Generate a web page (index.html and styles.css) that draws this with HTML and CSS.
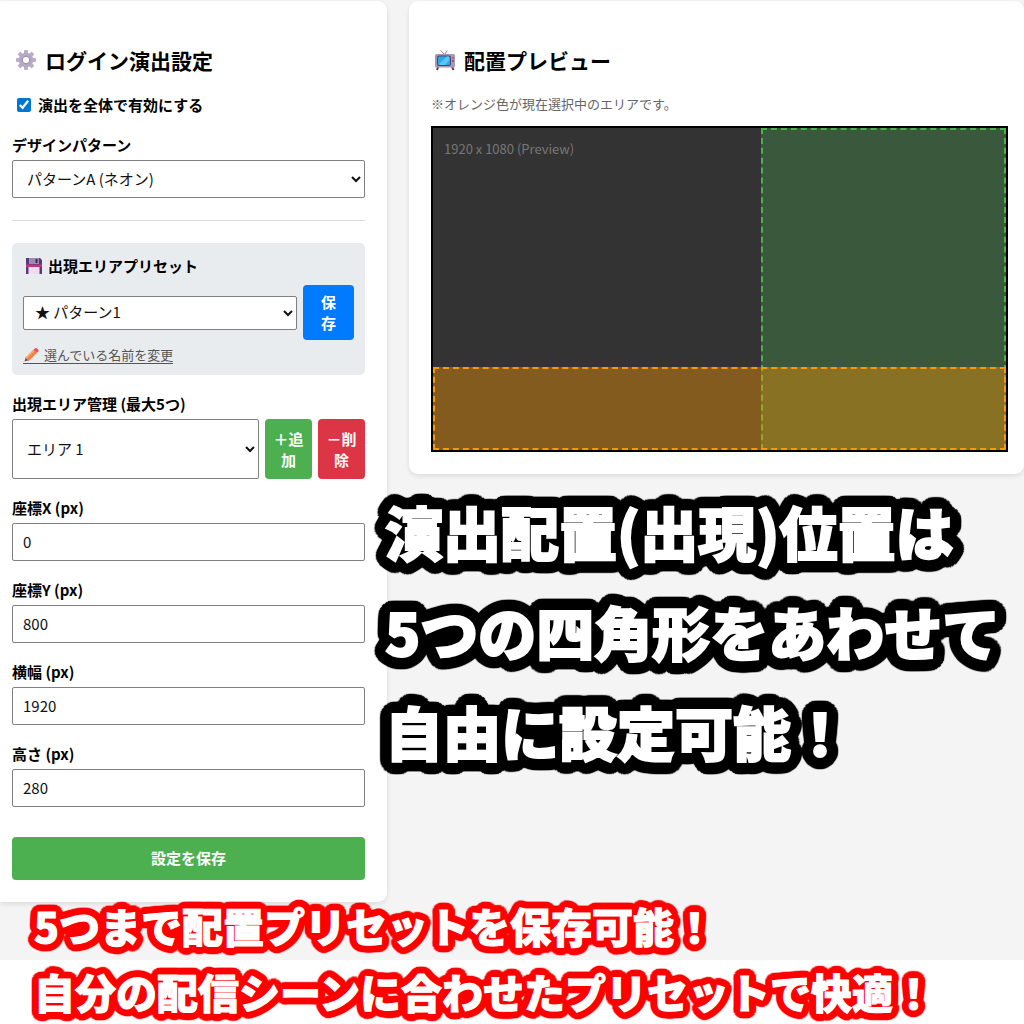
FILE: index.html
```html
<!DOCTYPE html>
<html lang="ja">
<head>
<meta charset="utf-8">
<meta name="viewport" content="width=device-width, initial-scale=1">
<title>ログイン演出設定</title>
<link rel="stylesheet" href="styles.css">
</head>
<body>
<div class="scene">
  <main class="layout">
    <form class="card settings">
      <h2 class="title">
        <svg class="title-icon" viewBox="0 0 28 28" aria-hidden="true">
          <g fill="#b9aecb">
            <rect x="12" y="4" width="4" height="20" rx="1"/>
            <rect x="12" y="4" width="4" height="20" rx="1" transform="rotate(45 14 14)"/>
            <rect x="12" y="4" width="4" height="20" rx="1" transform="rotate(90 14 14)"/>
            <rect x="12" y="4" width="4" height="20" rx="1" transform="rotate(135 14 14)"/>
          </g>
          <circle cx="14" cy="14" r="5.6" fill="#fff" stroke="#b5a9c6" stroke-width="3.4"/>
          <circle cx="14" cy="14" r="3.8" fill="#fff" stroke="#8d7fa3" stroke-width="1"/>
        </svg>
        ログイン演出設定
      </h2>
      <label class="toggle"><input type="checkbox" checked>演出を全体で有効にする</label>

      <div class="field">
        <label for="design">デザインパターン</label>
        <select id="design" class="control"><option>パターンA (ネオン)</option></select>
      </div>

      <hr class="divider">

      <section class="preset">
        <label class="preset-label" for="preset">
          <svg class="preset-icon" viewBox="0 0 21 20" aria-hidden="true">
            <path d="M3 2h14l2 2v14H3z" fill="#563a7c"/>
            <path d="M6 2h10v6H6z" fill="#9d8bb5"/>
            <path d="M12.500 3h2v4h-2z" fill="#3e2860"/>
            <path d="M3 8.500h16v2.500H3z" fill="#c2347b"/>
            <path d="M5.500 11h11v7h-11z" fill="#eedcf1"/>
          </svg>
          出現エリアプリセット
        </label>
        <div class="row preset-row">
          <select id="preset" class="control compact"><option>★ パターン1</option></select>
          <button type="button" class="btn blue">保存</button>
        </div>
        <a class="rename" href="#">
          <svg class="rename-icon" viewBox="0 0 17 16" aria-hidden="true">
            <path d="M1.500 14.500l1.300-4.300 3 3z" fill="#5b5560"/>
            <path d="M2.500 10.800l8-8 3.300 3.300-8 8z" fill="#f58142"/>
            <path d="M2.500 10.800l8-8 1.200 1.200-8 8z" fill="#ffa36b"/>
            <path d="M10.500 2.800l1.600-1.600q1-.7 2 .2l1.200 1.300q.8.900 0 1.900l-1.500 1.500z" fill="#e5525d"/>
          </svg>
          選んでいる名前を変更
        </a>
      </section>

      <div class="field">
        <label for="area">出現エリア管理 (最大5つ)</label>
        <div class="row">
          <select id="area" class="control"><option>エリア 1</option></select>
          <button type="button" class="btn green">＋追加</button>
          <button type="button" class="btn red">－削除</button>
        </div>
      </div>
      <div class="field"><label for="x">座標X (px)</label><input id="x" class="control" type="text" inputmode="numeric" value="0"></div>
      <div class="field"><label for="y">座標Y (px)</label><input id="y" class="control" type="text" inputmode="numeric" value="800"></div>
      <div class="field"><label for="w">横幅 (px)</label><input id="w" class="control" type="text" inputmode="numeric" value="1920"></div>
      <div class="field"><label for="h">高さ (px)</label><input id="h" class="control" type="text" inputmode="numeric" value="280"></div>
      <button type="submit" class="btn green submit">設定を保存</button>
    </form>

    <section class="card stage">
      <h2 class="title">
        <svg class="title-icon" viewBox="0 0 28 28" aria-hidden="true">
          <path d="M9.500 4.500l4 4 2.800-4" fill="none" stroke="#8c8593" stroke-width="1"/>
          <path d="M7.500 20l-1.500 4M21 20l1.300 4" stroke="#4b3f52" stroke-width="2"/>
          <rect x="4" y="8" width="20" height="13.500" rx="1.500" fill="#a898b3"/>
          <rect x="6" y="9.500" width="14" height="10.500" rx="2" fill="#51466b"/>
          <rect x="7" y="10.500" width="12" height="8.500" rx="1.500" fill="#29a8ee"/>
          <path d="M8 18l8-7.500h2v4L14 19H9z" fill="#58c7fa"/>
          <circle cx="22" cy="12" r="1" fill="#df4771"/>
          <circle cx="22" cy="15" r="1" fill="#6c5b78"/>
        </svg>
        配置プレビュー
      </h2>
      <p class="note">※オレンジ色が現在選択中のエリアです。</p>
      <div class="preview">
        <span>1920 x 1080 (Preview)</span>
        <div class="area" style="left:57.29%;top:0;width:42.71%;height:100%"></div>
        <div class="area active" style="left:0;top:74.07%;width:100%;height:25.93%"></div>
      </div>
    </section>
  </main>

  <p class="caption black">演出配置(出現)位置は<br>5つの四角形をあわせて<br>自由に設定可能！</p>
  <p class="caption crimson">5つまで配置プリセットを保存可能！<br>自分の配信シーンに合わせたプリセットで快適！</p>
</div>
</body>
</html>
```
FILE: styles.css
```css
* { box-sizing: border-box; }

body {
  margin: 0;
  background: #fff;
  color: #000;
  font: 15px/22px "Noto Sans CJK JP", sans-serif;
}

.scene {
  position: relative;
  min-height: 100vh;
  overflow: hidden;
}

.layout {
  display: grid;
  grid-template-columns: 387fr 615fr;
  align-items: start;
  gap: 22px;
  padding: 1px 0 58px;
  background: #f4f4f4;
}

.card {
  min-width: 0;
  background: #fff;
  box-shadow: 0 2px 5px rgba(0, 0, 0, .1);
}

.settings {
  padding: 44px 22px 22px 12px;
  border-radius: 0 9px 9px 0;
}

.stage {
  padding: 44px 16px 22px 22px;
  border-radius: 9px;
}

.title {
  display: flex;
  align-items: center;
  gap: 5px;
  margin: 0 0 19px;
  font-size: 21px;
  line-height: 30px;
}

.title-icon { width: 28px; height: 28px; }

.toggle {
  display: flex;
  align-items: center;
  gap: 7px;
  padding-left: 5px;
  font-weight: 700;
}

.toggle input {
  width: 14px;
  height: 14px;
  margin: 0;
  accent-color: #0075d4;
}

.field {
  display: flex;
  flex-direction: column;
  gap: 4px;
  margin-top: 18px;
}

.field label { font-weight: 700; }

.control {
  width: 100%;
  min-width: 0;
  height: 38px;
  padding: 0 10px 2px;
  border: 1px solid #808080;
  border-radius: 2px;
  background: #fff;
  color: #111;
  font: inherit;
}

.compact { height: 34px; padding: 0 7px 2px; }

.divider {
  margin: 22px 0;
  border: 0;
  border-top: 1px solid #ddd;
}

.preset {
  padding: 12px 11px 11px;
  border-radius: 5px;
  background: #e9ecef;
}

.preset-label {
  display: flex;
  align-items: center;
  gap: 4px;
  font-weight: 700;
}

.preset-icon { width: 21px; height: 20px; }

.row {
  display: flex;
  gap: 6px;
}

.row .control { flex: 1; height: auto; }

.preset-row {
  align-items: center;
  margin: 8px 0 6px;
}

.preset-row .compact { height: 34px; }

.btn {
  flex: none;
  width: 47px;
  padding: 8px;
  border: 0;
  border-radius: 4px;
  color: #fff;
  font: 700 15px/21px "Noto Sans CJK JP", sans-serif;
}

.green { background: #4caf50; }
.red { background: #dc3545; }
.row .btn { min-height: 60px; }
.row .blue {
  width: 51px;
  min-height: 55px;
  padding: 5px 16px 7px;
  background: #007bff;
}

.submit {
  width: 100%;
  margin-top: 30px;
  padding: 10px 11px 12px;
}

.rename {
  display: flex;
  align-items: center;
  gap: 4px;
  width: fit-content;
  border-bottom: 1px solid #555;
  color: #555;
  font-size: 13px;
  line-height: 17px;
  text-decoration: none;
}

.rename-icon { width: 17px; height: 16px; }

.note {
  margin: 0 0 12px;
  color: #666;
  font-size: 13px;
  line-height: 20px;
}

.preview {
  position: relative;
  box-sizing: content-box;
  aspect-ratio: 16 / 9;
  border: 2px solid #000;
  background: #333;
  color: #777;
  font-size: 13px;
}

.preview span {
  position: absolute;
  top: 10px;
  left: 11px;
}

.area {
  position: absolute;
  border: 2px dashed #4caf50;
  background: rgba(76, 175, 80, .3);
}

.active {
  border-color: #ff9800;
  background: rgba(255, 152, 0, .4);
}

/* Promotional captions laid over the panel; rings of shadows make a rounded outline */
.caption {
  position: absolute;
  margin: 0;
  font-weight: 900;
  white-space: nowrap;
  -webkit-text-fill-color: #fff;
}

/* The shadows take the text colour; the glyphs themselves stay white */
.black {
  top: 481px;
  left: 385px;
  color: #000;
  font-size: 58px;
  line-height: 100px;
  -webkit-text-stroke: 2px #fff;
  text-shadow:
    12px 0 1px #000, 12px 1px 1px #000, 12px 3px 1px #000, 11px 5px 1px #000, 10px 6px 1px #000, 9px 8px 1px #000,
    8px 9px 1px #000, 6px 10px 1px #000, 5px 11px 1px #000, 3px 12px 1px #000, 1px 12px 1px #000, 0 12px 1px #000,
    -1px 12px 1px #000, -3px 12px 1px #000, -5px 11px 1px #000, -6px 10px 1px #000, -8px 9px 1px #000,
    -9px 8px 1px #000, -10px 6px 1px #000, -11px 5px 1px #000, -12px 3px 1px #000, -12px 1px 1px #000, -12px 0 1px #000,
    -12px -1px 1px #000, -12px -3px 1px #000, -11px -5px 1px #000, -10px -6px 1px #000, -9px -8px 1px #000,
    -8px -9px 1px #000, -6px -10px 1px #000, -5px -11px 1px #000, -3px -12px 1px #000, -1px -12px 1px #000, 0 -12px 1px #000,
    1px -12px 1px #000, 3px -12px 1px #000, 5px -11px 1px #000, 6px -10px 1px #000, 8px -9px 1px #000,
    9px -8px 1px #000, 10px -6px 1px #000, 11px -5px 1px #000, 12px -3px 1px #000, 12px -1px 1px #000,
    6px 0 #000, 4px 4px #000, 0 6px #000, -4px 4px #000,
    -6px 0 #000, -4px -4px #000, 0 -6px #000, 4px -4px #000;
}

.crimson {
  top: 892px;
  left: 34px;
  color: #f00;
  font-size: 41px;
  line-height: 66px;
  -webkit-text-stroke: 1px #fff;
  text-shadow:
    7px 0 1px #f00, 7px 1px 1px #f00, 7px 2px 1px #f00, 6px 4px 1px #f00, 5px 5px 1px #f00, 4px 6px 1px #f00, 2px 7px 1px #f00,
    1px 7px 1px #f00, 0 7px 1px #f00, -1px 7px 1px #f00, -2px 7px 1px #f00, -4px 6px 1px #f00, -5px 5px 1px #f00,
    -6px 4px 1px #f00, -7px 2px 1px #f00, -7px 1px 1px #f00, -7px 0 1px #f00, -7px -1px 1px #f00, -7px -2px 1px #f00,
    -6px -4px 1px #f00, -5px -5px 1px #f00, -4px -6px 1px #f00, -2px -7px 1px #f00, -1px -7px 1px #f00,
    0 -7px 1px #f00, 1px -7px 1px #f00, 2px -7px 1px #f00, 4px -6px 1px #f00, 5px -5px 1px #f00,
    6px -4px 1px #f00, 7px -2px 1px #f00, 7px -1px 1px #f00,
    3px 0 #f00, 2px 2px #f00, 0 3px #f00, -2px 2px #f00,
    -3px 0 #f00, -2px -2px #f00, 0 -3px #f00, 2px -2px #f00;
}
```
